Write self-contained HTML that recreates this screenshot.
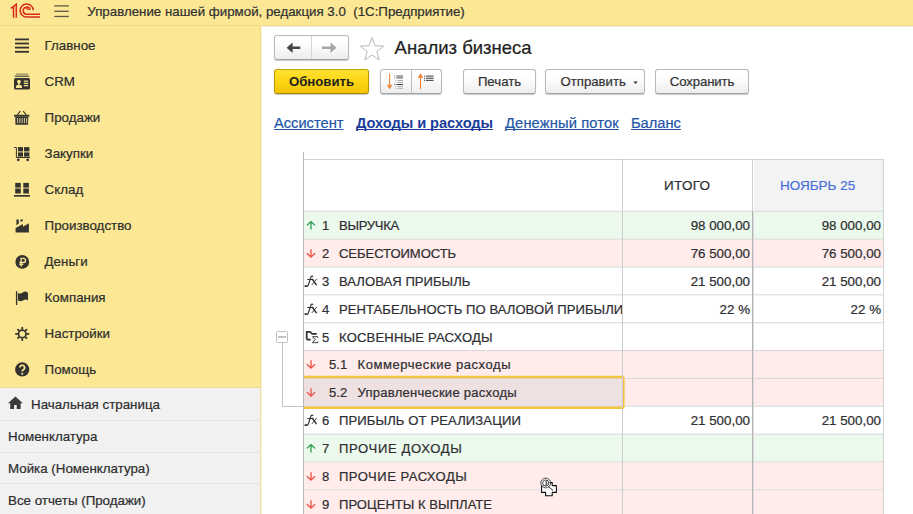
<!DOCTYPE html>
<html lang="ru">
<head>
<meta charset="utf-8">
<title>Анализ бизнеса</title>
<style>
*{box-sizing:border-box;margin:0;padding:0}
html,body{width:913px;height:514px;overflow:hidden;background:#fff}
body{font-family:"Liberation Sans",sans-serif;font-size:13.33px;color:#333;position:relative;-webkit-text-stroke:0.22px currentColor}
.abs{position:absolute}
/* top bar */
#topbar{left:0;top:0;width:913px;height:26px;background:#fce894}
#topline{left:0;top:25px;width:913px;height:1px;background:#edd988}
#topshadow{left:262px;top:26px;width:651px;height:1px;background:#f5f0dc}
#apptitle{left:87.3px;top:4px;font-size:13.3px;color:#303030;white-space:pre;line-height:16px}
/* sidebar */
#side{left:0;top:26px;width:261px;height:362px;background:#fce894;border-right:1px solid #f0db8c;border-bottom:1px solid #efdc92}
#sideborder{left:260px;top:388px;width:1px;height:126px;background:#f1e2a4}
.mi{left:44.6px;font-size:13.33px;color:#2e2e2e;line-height:16px;white-space:pre}
.ic{left:14px;width:16px;height:16px}
/* open windows panel */
#wins{left:0;top:388px;width:260px;height:126px;background:#f1f1f2}
.wl{left:0;width:260px;height:1px;background:#e1e1e1}
.wi{left:8px;font-size:13.33px;color:#2e2e2e;line-height:16px;white-space:pre}
/* content */
#title{left:394.6px;top:37px;font-size:18.5px;color:#222;line-height:22px;white-space:pre}
.btn{height:25px;border:1px solid #b9b9b9;border-bottom-color:#a3a3a3;border-radius:3px;background:linear-gradient(#ffffff 30%,#ededed);box-shadow:0 1px 1px rgba(0,0,0,.22);font-size:13.2px;color:#333;text-align:center;line-height:23px;white-space:pre}
.tab{top:114.4px;font-size:14.67px;color:#2456a8;text-decoration:underline;text-decoration-skip-ink:none;text-underline-offset:1.2px;text-decoration-thickness:1px;line-height:18px;white-space:pre}
/* table */
.row{left:304px;width:579px;height:27px}
.hl{left:304px;width:580px;height:1px;background:#d8d8d8}
.vl{width:1px;background:#c9c9c9}
.t{font-size:13.05px;color:#2f2f33;line-height:16px;white-space:pre}
.fx{font-family:"Liberation Serif",serif;font-style:italic;font-size:15.5px;line-height:18px;color:#2e2e2e;white-space:pre}
.fx span{font-size:10px;font-style:normal;font-weight:bold;font-family:"Liberation Sans",sans-serif;margin-left:-1.2px;position:relative;top:0.2px;color:#3c3c3c}
.num{text-align:right;width:120px;font-size:13.35px}
.g{background:#ebfaec}
.r{background:#ffeceb}
</style>
</head>
<body>
<!-- ===== top bar ===== -->
<div id="topbar" class="abs"></div>
<div id="topline" class="abs"></div>
<div id="topshadow" class="abs"></div>
<svg class="abs" style="left:0;top:0" width="80" height="25" viewBox="0 0 80 25">
  <g fill="none" stroke="#d9291b" stroke-width="1.5">
    <path d="M10.9 8.3L16.3 4.2V17.8"/>
    <path d="M13.5 6.6V17.8"/>
    <path d="M33.25 10.3A6.55 6.55 0 1 0 26.7 17.1H40"/>
    <path d="M30.2 9.8A3.55 3.55 0 1 0 26.7 14.2H40"/>
    <path d="M25.6 8.9A2.1 2.1 0 0 1 28.7 10.1" stroke-width="1.1"/>
  </g>
  <g fill="#5d5947"><rect x="54.3" y="5.25" width="14.5" height="1.3"/><rect x="54.3" y="10.65" width="14.5" height="1.3"/><rect x="54.3" y="15.8" width="14.5" height="1.3"/></g>
</svg>
<div id="apptitle" class="abs">Управление нашей фирмой, редакция 3.0  (1С:Предприятие)</div>

<!-- ===== sidebar ===== -->
<div id="side" class="abs"></div>
<div id="wins" class="abs"></div>
<div id="sideborder" class="abs"></div>
<div class="abs" style="left:261px;top:27px;width:1px;height:487px;background:#f9f3da"></div>

<div class="abs mi" style="top:38px">Главное</div>
<div class="abs mi" style="top:74px">CRM</div>
<div class="abs mi" style="top:110px">Продажи</div>
<div class="abs mi" style="top:146px">Закупки</div>
<div class="abs mi" style="top:182px">Склад</div>
<div class="abs mi" style="top:218px">Производство</div>
<div class="abs mi" style="top:254px">Деньги</div>
<div class="abs mi" style="top:290px">Компания</div>
<div class="abs mi" style="top:326px">Настройки</div>
<div class="abs mi" style="top:362px">Помощь</div>

<!-- icons -->
<!-- ICONS -->
<!-- Главное -->
<svg class="abs" style="left:14px;top:38px" width="16" height="16" viewBox="0 0 16 16"><g fill="#35332f"><rect x="1" y="0.5" width="14" height="1.8"/><rect x="1" y="4.6" width="14" height="1.8"/><rect x="1" y="8.7" width="14" height="1.8"/><rect x="1" y="12.9" width="14" height="1.8"/></g></svg>
<!-- CRM -->
<svg class="abs" style="left:14px;top:73px" width="16" height="17" viewBox="0 0 16 17"><rect x="1.6" y="0.5" width="12.8" height="1.2" rx="0.6" fill="#8f8662"/><rect x="0.7" y="2.5" width="14.6" height="1.4" rx="0.6" fill="#6a644c"/><rect x="0" y="4.9" width="16" height="11.6" rx="1.6" fill="#35332f"/><g fill="#fce894"><circle cx="4.95" cy="8.5" r="1.85"/><path d="M4 9.5H5.9V11.2H4Z"/><path d="M1.8 14.9C1.8 12.3 3 11.4 4.95 11.4S8.1 12.3 8.1 14.9Z"/><rect x="9.8" y="7.6" width="4.4" height="1.2"/><rect x="9.8" y="9.8" width="4.4" height="1.2"/><rect x="9.8" y="12" width="4.4" height="1.2"/></g></svg>
<!-- Продажи -->
<svg class="abs" style="left:14px;top:110px" width="16" height="16" viewBox="0 0 16 16"><path d="M3.3 5L6.3 1.2M12.2 5L9.2 1.2" stroke="#35332f" stroke-width="1.1" fill="none"/><rect x="0" y="4.8" width="15.4" height="1.9" fill="#35332f"/><path d="M1.2 6.7H14.3L14 14.7H1.5Z" fill="#35332f"/><g fill="#c9bd8a"><rect x="3" y="8" width="1.1" height="5.2"/><rect x="5.3" y="8" width="1.1" height="5.2"/><rect x="7.6" y="8" width="1.1" height="5.2"/><rect x="9.9" y="8" width="1.1" height="5.2"/><rect x="12.1" y="8" width="1.1" height="5.2"/></g></svg>
<!-- Закупки -->
<svg class="abs" style="left:14px;top:146px" width="16" height="16" viewBox="0 0 16 16"><path d="M0 1.5H2.4V11.5H16" stroke="#35332f" stroke-width="1" fill="none"/><g fill="#35332f"><rect x="4" y="1.1" width="5" height="4.3"/><rect x="10" y="1.1" width="5.4" height="4.3"/><rect x="4" y="6.4" width="5" height="4.2"/><rect x="10" y="6.4" width="5.4" height="4.2"/><circle cx="4.3" cy="13.8" r="1.4"/><circle cx="13.7" cy="13.8" r="1.4"/></g></svg>
<!-- Склад -->
<svg class="abs" style="left:14px;top:182px" width="16" height="16" viewBox="0 0 16 16"><g fill="#35332f"><rect x="1.2" y="0.9" width="5.6" height="4.7"/><rect x="9.3" y="0.9" width="5.6" height="4.7"/><rect x="1.2" y="6.5" width="5.6" height="5"/><rect x="9.3" y="6.5" width="5.6" height="5"/><rect x="0" y="13" width="15.9" height="1.7"/></g></svg>
<!-- Производство -->
<svg class="abs" style="left:14px;top:218px" width="16" height="16" viewBox="0 0 16 16"><g fill="#35332f"><path d="M1.6 14.6V9.9L8.9 5.9V8.8L14.9 5.2V14.6Z"/><path d="M2.4 1.5H4.8V5.4L2.4 7.3Z"/><path d="M6.5 1.5H9V2.4L6.5 4.3Z"/></g></svg>
<!-- Деньги -->
<svg class="abs" style="left:14px;top:254px" width="16" height="16" viewBox="0 0 16 16"><circle cx="8.25" cy="7.9" r="6.9" fill="#35332f"/><path d="M7.1 12.7V4.3H9.4A2.1 2.1 0 0 1 9.4 8.5H5.4M5.4 10.3H9.3" stroke="#fce894" stroke-width="1.3" fill="none"/></svg>
<!-- Компания -->
<svg class="abs" style="left:14px;top:290px" width="16" height="16" viewBox="0 0 16 16"><rect x="1.9" y="1.2" width="1.4" height="13.8" fill="#35332f"/><path d="M4 3C5.5 4.2 7.5 3.4 9 2.3S12.5 1.4 14 2.9V10.5C12.5 9.2 10.8 9.4 9 10.5S5.5 11.3 4 10.5Z" fill="#35332f"/></svg>
<!-- Настройки -->
<svg class="abs" style="left:14px;top:326px" width="17" height="16" viewBox="0 0 17 16"><g transform="translate(8.25 7.9)"><circle r="3.75" fill="none" stroke="#35332f" stroke-width="1.7"/><g stroke="#35332f" stroke-width="1.7"><path d="M0 -4.3V-7M0 4.3V7M-4.3 0H-7M4.3 0H7"/><path d="M3.05 -3.05L4.8 -4.8M-3.05 -3.05L-4.8 -4.8M3.05 3.05L4.8 4.8M-3.05 3.05L-4.8 4.8"/></g></g></svg>
<!-- Помощь -->
<svg class="abs" style="left:14px;top:362px" width="17" height="16" viewBox="0 0 17 16"><circle cx="8.2" cy="7.4" r="7.1" fill="#35332f"/><path d="M5.9 5.6A2.35 2.35 0 1 1 9.3 7.7C8.5 8.2 8.2 8.6 8.2 9.6" stroke="#fce894" stroke-width="1.7" fill="none"/><circle cx="8.2" cy="11.8" r="1.05" fill="#fce894"/></svg>
<!-- home -->
<svg class="abs" style="left:8px;top:396px" width="16" height="14" viewBox="0 0 16 14"><path d="M0 7.2L7.4 0.6L14.8 7.2H12.6V12.9H8.7V8.9H6.1V12.9H2.2V7.2Z" fill="#3a3a3a"/></svg>
<!-- /ICONS -->

<!-- open windows -->
<div class="abs wl" style="top:420px"></div>
<div class="abs wl" style="top:452px"></div>
<div class="abs wl" style="top:483px"></div>
<div class="abs wi" style="left:31px;top:397px">Начальная страница</div>
<div class="abs wi" style="top:429px">Номенклатура</div>
<div class="abs wi" style="top:461px">Мойка (Номенклатура)</div>
<div class="abs wi" style="top:493px">Все отчеты (Продажи)</div>

<!-- ===== content header ===== -->
<div class="abs btn" style="left:274px;top:35px;width:75px;height:25px"></div>
<div class="abs" style="left:311px;top:36px;width:1px;height:23px;background:#d4d4d4"></div>
<div id="title" class="abs">Анализ бизнеса</div>

<div class="abs btn" style="left:274px;top:69px;width:95px;font-weight:bold;-webkit-text-stroke:0;background:linear-gradient(#ffe330,#fbd20f 60%,#f4c400);border-color:#c2a000 #b89700 #a88900;color:#1f1f1f">Обновить</div>
<div class="abs btn" style="left:380px;top:69px;width:62px"></div>
<div class="abs" style="left:411px;top:70px;width:1px;height:24px;background:#bdbdbd"></div>
<div class="abs btn" style="left:463px;top:69px;width:73px">Печать</div>
<div class="abs btn" style="left:545px;top:69px;width:100px;text-align:left;padding-left:14.5px">Отправить</div>
<div class="abs btn" style="left:655px;top:69px;width:94px;letter-spacing:-0.12px">Сохранить</div>
<svg class="abs" style="left:0;top:0" width="913" height="100" viewBox="0 0 913 100"><polygon points="372.00,37.50 375.00,45.77 383.79,46.07 376.85,51.48 379.29,59.93 372.00,55.00 364.71,59.93 367.15,51.48 360.21,46.07 369.00,45.77" fill="#fff" stroke="#b9b9b9" stroke-width="1"/><path d="M286.6 47.8L292.6 42.6V46.5H300.3V49.1H292.6V53Z" fill="#454545"/><path d="M336.5 47.8L330.5 42.6V46.5H322V49.1H330.5V53Z" fill="#a6a6a6"/><path d="M389.6 73.5V88" stroke="#f0853a" stroke-width="1.1" fill="none"/><path d="M387.2 85.2L389.6 88.8L392 85.2Z" fill="#f0853a" stroke="#f0853a" stroke-width="0.6"/><rect x="396.3" y="75.5" width="6.699999999999989" height="1" fill="#555"/><rect x="396.3" y="77.4" width="6.699999999999989" height="1" fill="#555"/><rect x="397.5" y="80.0" width="5.5" height="1" fill="#b0b0b0"/><rect x="397.5" y="81.8" width="5.5" height="1" fill="#b0b0b0"/><rect x="396.3" y="84.0" width="6.699999999999989" height="1" fill="#444"/><rect x="397.5" y="85.9" width="5.5" height="1" fill="#b0b0b0"/><rect x="397.5" y="87.8" width="5.5" height="1" fill="#b0b0b0"/><rect x="394" y="75.5" width="1.2" height="1" fill="#999"/><rect x="394" y="77.4" width="1.2" height="1" fill="#999"/><rect x="395.2" y="80.0" width="1.2" height="1" fill="#c4c4c4"/><rect x="395.2" y="81.8" width="1.2" height="1" fill="#c4c4c4"/><rect x="394" y="84.0" width="1.2" height="1" fill="#888"/><rect x="395.2" y="85.9" width="1.2" height="1" fill="#c4c4c4"/><rect x="395.2" y="87.8" width="1.2" height="1" fill="#c4c4c4"/><path d="M420.5 74.5V89" stroke="#f0853a" stroke-width="1.1" fill="none"/><path d="M418.1 77.4L420.5 73.8L422.9 77.4Z" fill="#f0853a" stroke="#f0853a" stroke-width="0.6"/><rect x="426" y="75.55" width="7.6" height="1.1" fill="#4a4a4a"/><rect x="424" y="75.55" width="1.1" height="1.1" fill="#555"/><rect x="426" y="77.7" width="7.6" height="1.1" fill="#4a4a4a"/><rect x="424" y="77.7" width="1.1" height="1.1" fill="#555"/><rect x="426" y="79.85000000000001" width="7.6" height="1.1" fill="#4a4a4a"/><rect x="424" y="79.85000000000001" width="1.1" height="1.1" fill="#555"/><path d="M633.4 81.6H637.8L635.6 84Z" fill="#333"/></svg>

<div class="abs tab" style="left:274px">Ассистент</div>
<div class="abs tab" style="left:356px;font-weight:bold;color:#1b3c9a;letter-spacing:-0.07px;-webkit-text-stroke:0">Доходы и расходы</div>
<div class="abs tab" style="left:505px;letter-spacing:0.15px">Денежный поток</div>
<div class="abs tab" style="left:631px">Баланс</div>

<!-- ===== table ===== -->
<!-- TABLE -->
<div class="abs" style="left:754px;top:160px;width:129px;height:51px;background:#f3f3f3"></div>
<div class="abs t" style="left:664px;top:178px;font-size:13.5px;letter-spacing:0.3px">ИТОГО</div>
<div class="abs t" style="left:780px;top:178px;font-size:13.5px;color:#4a6fdc">НОЯБРЬ 25</div>
<svg class="abs" style="left:0;top:0" width="913" height="514" viewBox="0 0 913 514"><rect x="304" y="211.80" width="579.5" height="26.85" fill="#ebfaec"/><rect x="304" y="239.65" width="579.5" height="26.85" fill="#ffeceb"/><rect x="304" y="351.05" width="579.5" height="26.85" fill="#ffeceb"/><rect x="304" y="378.90" width="579.5" height="26.85" fill="#ffeceb"/><rect x="304" y="434.60" width="579.5" height="26.85" fill="#ebfaec"/><rect x="304" y="462.45" width="579.5" height="26.85" fill="#ffeceb"/><rect x="304" y="490.30" width="579.5" height="26.85" fill="#ffeceb"/><rect x="304" y="378.40" width="318.5" height="27.85" fill="#efe0e1"/><rect x="304" y="159" width="580" height="1" fill="#d2d2d2"/><rect x="304" y="210.80" width="580" height="1" fill="#d6d6d6"/><rect x="304" y="238.65" width="580" height="1" fill="#d6d6d6"/><rect x="304" y="266.50" width="580" height="1" fill="#d6d6d6"/><rect x="304" y="294.35" width="580" height="1" fill="#d6d6d6"/><rect x="304" y="322.20" width="580" height="1" fill="#d6d6d6"/><rect x="304" y="350.05" width="580" height="1" fill="#d6d6d6"/><rect x="304" y="377.90" width="580" height="1" fill="#d6d6d6"/><rect x="304" y="405.75" width="580" height="1" fill="#d6d6d6"/><rect x="304" y="433.60" width="580" height="1" fill="#d6d6d6"/><rect x="304" y="461.45" width="580" height="1" fill="#d6d6d6"/><rect x="304" y="489.30" width="580" height="1" fill="#d6d6d6"/><path d="M304 377.05H622.3a1 1 0 0 1 1 1V406.75a1 1 0 0 1 -1 1H304" fill="none" stroke="#f3c742" stroke-width="2.6"/></svg>
<svg class="abs" style="left:306px;top:221px" width="10" height="10" viewBox="0 0 10 10"><path d="M5 8.4V0.8M1 4.4L5 0.5L9 4.4" fill="none" stroke="#2f9d52" stroke-width="1.3"/></svg>
<div class="abs t" style="left:322px;top:218px">1</div>
<div class="abs t" style="left:339px;top:218px;letter-spacing:-0.300px;">ВЫРУЧКА</div>
<div class="abs t num" style="left:630px;top:218px">98 000,00</div>
<div class="abs t num" style="left:761px;top:218px">98 000,00</div>
<svg class="abs" style="left:306px;top:249px" width="10" height="10" viewBox="0 0 10 10"><path d="M5 0.3V8M1 4.3L5 8.2L9 4.3" fill="none" stroke="#ee4f40" stroke-width="1.3"/></svg>
<div class="abs t" style="left:322px;top:246px">2</div>
<div class="abs t" style="left:339px;top:246px;letter-spacing:-0.058px;">СЕБЕСТОИМОСТЬ</div>
<div class="abs t num" style="left:630px;top:246px">76 500,00</div>
<div class="abs t num" style="left:761px;top:246px">76 500,00</div>
<svg class="abs" style="left:304px;top:275px" width="14" height="13" viewBox="0 0 14 13"><g fill="none" stroke="#333" stroke-linecap="round"><path d="M8.9 1.5C8.4 0.8 7.3 0.9 6.9 2.2L4.4 9.7C3.9 11.3 2.6 11.9 1.3 11.2" stroke-width="1.15"/><path d="M1.2 11.1H2.4" stroke-width="1.6"/><path d="M3.7 4.5H9" stroke-width="1"/><path d="M8.4 4.4L12.2 9.6" stroke-width="1.55"/><path d="M12.6 4.1L8 9.7" stroke-width="0.9"/></g></svg>
<div class="abs t" style="left:322px;top:274px">3</div>
<div class="abs t" style="left:339px;top:274px;letter-spacing:0.050px;">ВАЛОВАЯ ПРИБЫЛЬ</div>
<div class="abs t num" style="left:630px;top:274px">21 500,00</div>
<div class="abs t num" style="left:761px;top:274px">21 500,00</div>
<svg class="abs" style="left:304px;top:303px" width="14" height="13" viewBox="0 0 14 13"><g fill="none" stroke="#333" stroke-linecap="round"><path d="M8.9 1.5C8.4 0.8 7.3 0.9 6.9 2.2L4.4 9.7C3.9 11.3 2.6 11.9 1.3 11.2" stroke-width="1.15"/><path d="M1.2 11.1H2.4" stroke-width="1.6"/><path d="M3.7 4.5H9" stroke-width="1"/><path d="M8.4 4.4L12.2 9.6" stroke-width="1.55"/><path d="M12.6 4.1L8 9.7" stroke-width="0.9"/></g></svg>
<div class="abs t" style="left:322px;top:302px">4</div>
<div class="abs t" style="left:339px;top:302px;letter-spacing:0.060px;width:283px;overflow:hidden;">РЕНТАБЕЛЬНОСТЬ ПО ВАЛОВОЙ ПРИБЫЛИ</div>
<div class="abs t num" style="left:630px;top:302px">22 %</div>
<div class="abs t num" style="left:761px;top:302px">22 %</div>
<svg class="abs" style="left:304px;top:329px" width="16" height="16" viewBox="0 0 16 16"><path d="M2.7 10.6V2.8H6.2L7.9 4.8H12.7M2.7 10.6H6.7" fill="none" stroke="#333" stroke-width="1.75" stroke-linejoin="round"/><path d="M13.7 8.9V7.7H8.5L11.1 10.6L8.4 13.7H13.9V12.5" fill="none" stroke="#333" stroke-width="0.95"/></svg>
<div class="abs t" style="left:322px;top:330px">5</div>
<div class="abs t" style="left:339px;top:330px;letter-spacing:0.181px;">КОСВЕННЫЕ РАСХОДЫ</div>
<svg class="abs" style="left:306px;top:360px" width="10" height="10" viewBox="0 0 10 10"><path d="M5 0.3V8M1 4.3L5 8.2L9 4.3" fill="none" stroke="#ee4f40" stroke-width="1.3"/></svg>
<div class="abs t" style="left:329px;top:357px">5.1</div>
<div class="abs t" style="left:357.5px;top:357px;letter-spacing:0.537px">Коммерческие расходы</div>
<svg class="abs" style="left:306px;top:388px" width="10" height="10" viewBox="0 0 10 10"><path d="M5 0.3V8M1 4.3L5 8.2L9 4.3" fill="none" stroke="#ee4f40" stroke-width="1.3"/></svg>
<div class="abs t" style="left:329px;top:385px">5.2</div>
<div class="abs t" style="left:357.5px;top:385px;letter-spacing:0.257px">Управленческие расходы</div>
<svg class="abs" style="left:304px;top:414px" width="14" height="13" viewBox="0 0 14 13"><g fill="none" stroke="#333" stroke-linecap="round"><path d="M8.9 1.5C8.4 0.8 7.3 0.9 6.9 2.2L4.4 9.7C3.9 11.3 2.6 11.9 1.3 11.2" stroke-width="1.15"/><path d="M1.2 11.1H2.4" stroke-width="1.6"/><path d="M3.7 4.5H9" stroke-width="1"/><path d="M8.4 4.4L12.2 9.6" stroke-width="1.55"/><path d="M12.6 4.1L8 9.7" stroke-width="0.9"/></g></svg>
<div class="abs t" style="left:322px;top:413px">6</div>
<div class="abs t" style="left:339px;top:413px;letter-spacing:0.120px;">ПРИБЫЛЬ ОТ РЕАЛИЗАЦИИ</div>
<div class="abs t num" style="left:630px;top:413px">21 500,00</div>
<div class="abs t num" style="left:761px;top:413px">21 500,00</div>
<svg class="abs" style="left:306px;top:444px" width="10" height="10" viewBox="0 0 10 10"><path d="M5 8.4V0.8M1 4.4L5 0.5L9 4.4" fill="none" stroke="#2f9d52" stroke-width="1.3"/></svg>
<div class="abs t" style="left:322px;top:441px">7</div>
<div class="abs t" style="left:339px;top:441px;letter-spacing:0.650px;">ПРОЧИЕ ДОХОДЫ</div>
<svg class="abs" style="left:306px;top:472px" width="10" height="10" viewBox="0 0 10 10"><path d="M5 0.3V8M1 4.3L5 8.2L9 4.3" fill="none" stroke="#ee4f40" stroke-width="1.3"/></svg>
<div class="abs t" style="left:322px;top:469px">8</div>
<div class="abs t" style="left:339px;top:469px;letter-spacing:0.485px;">ПРОЧИЕ РАСХОДЫ</div>
<svg class="abs" style="left:306px;top:500px" width="10" height="10" viewBox="0 0 10 10"><path d="M5 0.3V8M1 4.3L5 8.2L9 4.3" fill="none" stroke="#ee4f40" stroke-width="1.3"/></svg>
<div class="abs t" style="left:322px;top:497px">9</div>
<div class="abs t" style="left:339px;top:497px;letter-spacing:0.024px;">ПРОЦЕНТЫ К ВЫПЛАТЕ</div>
<div class="abs vl" style="left:303px;top:152px;height:362px;background:#bababa"></div>
<div class="abs vl" style="left:622px;top:159px;height:355px;background:#cccccc"></div>
<div class="abs vl" style="left:752px;top:159px;height:52px;background:#d0d0d0"></div>
<div class="abs vl" style="left:752px;top:211px;height:303px;background:#b4b4b4"></div>
<div class="abs vl" style="left:753px;top:211px;height:303px;background:#dcdcdc"></div>
<div class="abs vl" style="left:883px;top:159px;height:355px;background:#d2d2d2"></div>
<div class="abs" style="left:276px;top:331px;width:12px;height:12px;border:1px solid #c2c2c2;border-radius:1.5px;background:#fff"></div>
<div class="abs" style="left:278px;top:336px;width:8px;height:2px;background:#c4c4c4"></div>
<div class="abs" style="left:282px;top:343px;width:1px;height:64px;background:#c2c2c2"></div>
<div class="abs" style="left:282px;top:406px;width:21px;height:1px;background:#c2c2c2"></div>
<!-- /TABLE -->
<!-- cursor -->
<svg class="abs" style="left:538px;top:476px" width="22" height="22" viewBox="538 476 22 22">
<path d="M545.6 485.6H541.6V492.4H545.6V495.8H552.2V492.4H556.4V485.6H552.2V482.6H548Z" fill="#fff" stroke="#111" stroke-width="1.1" stroke-linejoin="round"/>
<circle cx="545.7" cy="483" r="4.9" fill="rgba(255,255,255,.75)" stroke="#222" stroke-width="0.8"/>
<circle cx="545.7" cy="483" r="3.1" fill="none" stroke="#222" stroke-width="0.8"/>
<path d="M546.2 480.5V485.5M548.5 486.5L553 490.5" stroke="#222" stroke-width="1" fill="none"/>
</svg>
</body>
</html>
